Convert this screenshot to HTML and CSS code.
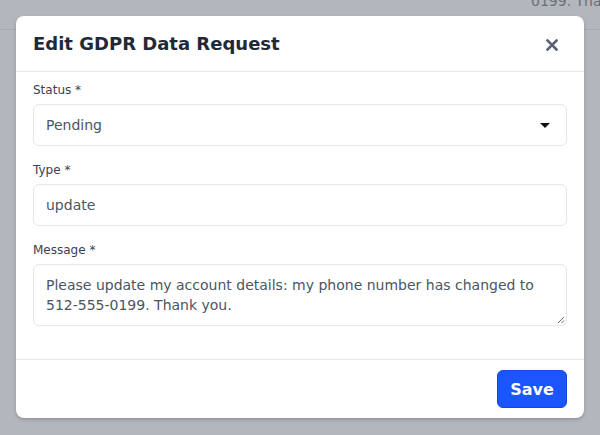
FILE: index.html
```html
<!DOCTYPE html>
<html>
<head>
<meta charset="utf-8">
<link rel="stylesheet" href="styles.css">
</head>
<body>
<div class="page">
  <div class="bg-row"><span class="bg-text">0199. Thank you.</span></div>
</div>
<div class="backdrop">
  <div class="modal">
    <div class="modal-header">
      <h2 class="title">Edit GDPR Data Request</h2>
      <button class="close" aria-label="Close">
        <svg width="12" height="12" viewBox="0 0 12 12"><path d="M1.5 1.5 L10.5 10.5 M10.5 1.5 L1.5 10.5" stroke="#5b6270" stroke-width="2.6" stroke-linecap="square"/></svg>
      </button>
    </div>
    <div class="modal-body">
      <div class="field">
        <label class="label">Status *</label>
        <div class="select">
          <span>Pending</span>
          <svg class="caret" width="10" height="5" viewBox="0 0 10 5"><path d="M0 0 L10 0 L5 5 Z" fill="#111"/></svg>
        </div>
      </div>
      <div class="field">
        <label class="label">Type *</label>
        <div class="input">update</div>
      </div>
      <div class="field">
        <label class="label">Message *</label>
        <div class="textarea">Please update my account details: my phone number has changed to 512-555-0199. Thank you.
          <svg class="grip" width="8" height="8" viewBox="0 0 8 8"><path d="M7 1 L1 7 M7 4.5 L4.5 7" stroke="#666" stroke-width="1"/></svg>
        </div>
      </div>
    </div>
    <div class="modal-footer">
      <button class="save">Save</button>
    </div>
  </div>
</div>
</body>
</html>
```
FILE: styles.css
```css
html, body {
  margin: 0;
  padding: 0;
}
body {
  width: 600px;
  height: 435px;
  overflow: hidden;
  position: relative;
  background: #b3b6bd;
  font-family: "DejaVu Sans", sans-serif;
}
.page {
  height: 435px;
  overflow: hidden;
}
.bg-row {
  height: 29px;
  border-bottom: 1px solid #a8abb3;
  position: relative;
  overflow: hidden;
}
.bg-text {
  position: absolute;
  left: 531px;
  top: -7px;
  font-size: 14px;
  color: #6b6f78;
  white-space: nowrap;
}
.backdrop {
  position: absolute;
  inset: 0;
  display: flex;
  justify-content: center;
  align-items: flex-start;
  padding-top: 16px;
}
.modal {
  width: 568px;
  box-sizing: border-box;
  background: #fff;
  border-radius: 8px;
  box-shadow: 0 2px 4px rgba(0,0,0,0.14), 0 1px 2px rgba(0,0,0,0.08);
}
.modal-header {
  display: flex;
  align-items: center;
  justify-content: space-between;
  padding: 0 17px;
  height: 56px;
  box-sizing: border-box;
  border-bottom: 1px solid #e5e7eb;
}
.title {
  margin: 0;
  font-size: 18px;
  font-weight: bold;
  color: #1f2937;
  line-height: 22px;
}
.close {
  border: 0;
  background: none;
  padding: 0;
  margin-right: 9px;
  margin-top: 2px;
  width: 12px;
  height: 12px;
  display: flex;
}
.modal-body {
  padding: 9px 17px 33px;
  display: flex;
  flex-direction: column;
  gap: 15px;
}
.field {
  display: flex;
  flex-direction: column;
  gap: 5px;
}
.label {
  font-size: 12px;
  color: #374151;
  line-height: 18px;
}
.select, .input, .textarea {
  border: 1px solid #e5e7eb;
  border-radius: 6px;
  padding: 0 12px;
  font-size: 14px;
  line-height: 20px;
  color: #4b5563;
  box-sizing: border-box;
}
.select {
  height: 42px;
  display: flex;
  align-items: center;
  justify-content: space-between;
}
.caret {
  margin-right: 4px;
  margin-top: 1px;
}
.input {
  height: 42px;
  display: flex;
  align-items: center;
}
.textarea {
  height: 62px;
  position: relative;
  padding-top: 10px;
}
.grip {
  position: absolute;
  right: 1px;
  bottom: 1px;
}
.modal-footer {
  border-top: 1px solid #e5e7eb;
  padding: 10px 17px;
  display: flex;
  justify-content: flex-end;
}
.save {
  background: #1a56fb;
  color: #fff;
  border: 1px solid #1449e0;
  border-radius: 6px;
  font-family: "DejaVu Sans", sans-serif;
  font-weight: bold;
  font-size: 16px;
  width: 70px;
  height: 38px;
  padding: 0;
}
```
